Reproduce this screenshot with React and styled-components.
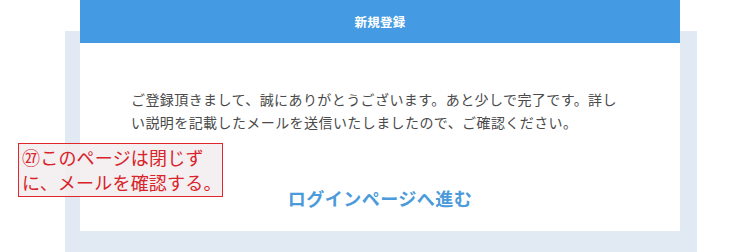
import React from "react";
import styled, { createGlobalStyle } from "styled-components";

const Global = createGlobalStyle`
  html, body { margin: 0; padding: 0; background: #ffffff; }
  body { font-family: "Noto Sans CJK JP", "Noto Sans", sans-serif; }
`;

const Page = styled.div`
  position: relative;
  width: 750px;
  height: 252px;
  overflow: hidden;
  padding-top: 31px;
  box-sizing: border-box;
`;

const Panel = styled.div`
  display: flex;
  margin-left: 65px;
  width: 632px;
  height: 221px;
  background: #e1eaf2;
  padding: 0 17px 0 15px;
  box-sizing: border-box;
`;

const Card = styled.div`
  margin-top: -31px;
  width: 600px;
  height: 231px;
  background: #ffffff;
  display: flex;
  flex-direction: column;
`;

const Header = styled.div`
  height: 43px;
  flex: none;
  background: #459be3;
  color: #ffffff;
  display: flex;
  align-items: center;
  justify-content: center;
  font-size: 12.5px;
  font-weight: 700;
  letter-spacing: 0.3px;
`;

const Body = styled.div`
  padding: 45px 50px 0 51px;
  color: #4a4a4a;
  font-size: 14px;
  line-height: 23px;
  letter-spacing: 0.42px;
`;

const LinkRow = styled.div`
  margin-top: 52px;
  display: flex;
  justify-content: center;
`;

const NextLink = styled.a`
  color: #4b9bda;
  font-size: 18px;
  font-weight: 700;
  letter-spacing: 0.5px;
  text-decoration: none;
  line-height: 24px;
  cursor: pointer;
`;

const Note = styled.div`
  position: absolute;
  left: 18px;
  top: 143px;
  width: 205px;
  height: 54px;
  box-sizing: border-box;
  border: 1px solid #e2262b;
  background: rgba(243, 237, 238, 0.88);
  color: #d8232a;
  font-size: 18px;
  line-height: 25px;
  padding: 1px 0 0 3px;
  white-space: nowrap;
  letter-spacing: 0.2px;
`;

const NoteLine = styled.div``;

export default function App() {
  return (
    <>
      <Global />
      <Page>
        <Panel>
          <Card>
            <Header>新規登録</Header>
            <Body>
              ご登録頂きまして、誠にありがとうございます。あと少しで完了です。詳しい説明を記載したメールを送信いたしましたので、ご確認ください。
            </Body>
            <LinkRow>
              <NextLink>ログインページへ進む</NextLink>
            </LinkRow>
          </Card>
        </Panel>
        <Note>
          <NoteLine>㉗このページは閉じず</NoteLine>
          <NoteLine>に、メールを確認する。</NoteLine>
        </Note>
      </Page>
    </>
  );
}
